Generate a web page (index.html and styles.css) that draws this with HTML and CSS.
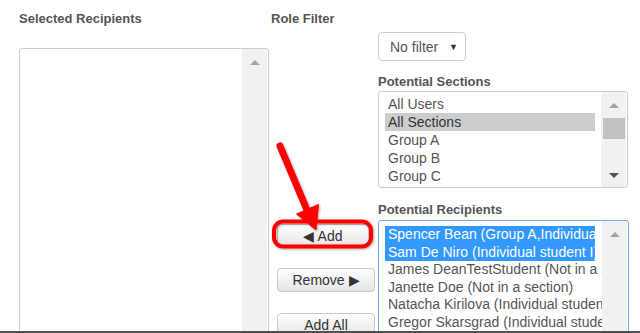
FILE: index.html
```html
<!DOCTYPE html>
<html lang="en">
<head>
    <meta charset="UTF-8">
    <title>Message Recipients</title>
    <link rel="stylesheet" href="styles.css">
</head>
<body>
    <div class="page">

        <!-- Selected recipients -->
        <div class="col col-selected">
            <h3 class="label">Selected Recipients</h3>
            <div class="listbox listbox-selected">
                <div class="options"></div>
                <div class="scrollbar">
                    <span class="arrow-up"></span>
                </div>
            </div>
        </div>

        <!-- Move buttons -->
        <div class="col col-actions">
            <h3 class="label">Role Filter</h3>
            <button class="btn btn-add">&#9664; Add</button>
            <button class="btn btn-remove">Remove &#9654;</button>
            <button class="btn btn-add-all">Add All</button>
        </div>

        <!-- Filters and potential lists -->
        <div class="col col-filter">
            <div class="dropdown">
                <span>No filter</span>
                <span class="caret">&#9660;</span>
            </div>

            <h3 class="label label-sections">Potential Sections</h3>
            <div class="listbox listbox-sections">
                <div class="options">
                    <div class="option">All Users</div>
                    <div class="option selected">All Sections</div>
                    <div class="option">Group A</div>
                    <div class="option">Group B</div>
                    <div class="option">Group C</div>
                    <div class="option">Individual students</div>
                </div>
                <div class="scrollbar">
                    <span class="arrow-up"></span>
                    <span class="thumb"></span>
                    <span class="arrow-down"></span>
                </div>
            </div>

            <h3 class="label label-recipients">Potential Recipients</h3>
            <div class="listbox listbox-recipients">
                <div class="options">
                    <div class="option active">Spencer Bean (Group A,Individual student)</div>
                    <div class="option active">Sam De Niro (Individual student I)</div>
                    <div class="option">James DeanTestStudent (Not in a section)</div>
                    <div class="option">Janette Doe (Not in a section)</div>
                    <div class="option">Natacha Kirilova (Individual student)</div>
                    <div class="option">Gregor Skarsgrad (Individual student)</div>
                    <div class="option">Mary Smith (Group B)</div>
                </div>
                <div class="scrollbar">
                    <span class="arrow-up"></span>
                </div>
            </div>
        </div>

        <!-- Callout drawn over the Add button -->
        <svg class="callout" width="640" height="333" viewBox="0 0 640 333">
            <defs>
                <filter id="shadow" x="-20%" y="-20%" width="140%" height="140%">
                    <feDropShadow dx="1" dy="1" stdDeviation="1" flood-color="#000" flood-opacity="0.35"/>
                </filter>
            </defs>
            <g filter="url(#shadow)" fill="none" stroke="#ff0000">
                <rect x="274" y="221.5" width="97" height="25" rx="9" stroke-width="4"/>
                <line x1="280" y1="146" x2="307" y2="210" stroke-width="7" stroke-linecap="round"/>
                <polygon points="316,230 318.5,204.5 296.5,214" fill="#ff0000" stroke-width="1" stroke-linejoin="round"/>
            </g>
        </svg>
    </div>
</body>
</html>
```

FILE: styles.css
```css
/* General Reset */
* {
    margin: 0;
    padding: 0;
    box-sizing: border-box;
}

body {
    background: #fff;
    font-family: 'Liberation Sans', Arial, sans-serif;
    color: #555;
}

/* Page frame */
.page {
    position: relative;
    height: 333px;
    overflow: hidden;
    border-bottom: 2px solid #4f4f4f;
    padding: 11px 0 0 19px;
    display: grid;
    grid-template-columns: 252px 107px 251px;
    align-items: start;
}

.col {
    display: flex;
    flex-direction: column;
    align-items: flex-start;
}

.label {
    font-size: 13px;
    font-weight: bold;
    line-height: 16px;
    color: #555;
    white-space: nowrap;
}

/* List boxes */
.listbox {
    display: flex;
    background: #fff;
    border: 1px solid #ccc;
    border-radius: 3px;
    overflow: hidden;
    padding-right: 1px;
}

.options {
    flex: 1;
    overflow: hidden;
    padding: 3px 4px 0 6px;
    font-size: 14px;
    white-space: nowrap;
}

.option {
    width: 210px;
    line-height: 18px;
    padding-left: 3px;
    color: #555;
}

.option.selected {
    background: #cdcdcd;
    color: #333;
}

.option.active {
    background: #3399ff;
    color: #fff;
}

.scrollbar {
    width: 25px;
    background: #f1f1f1;
    display: flex;
    flex-direction: column;
    align-items: center;
}

.arrow-up,
.arrow-down {
    width: 0;
    height: 0;
    border-left: 5.5px solid transparent;
    border-right: 5.5px solid transparent;
}

.arrow-up {
    margin-top: 11px;
    border-bottom: 5px solid #a3a3a3;
}

.arrow-down {
    margin-top: auto;
    margin-bottom: 9px;
    border-top: 5px solid #505050;
}

.thumb {
    width: 22px;
    height: 21px;
    margin-top: 10px;
    background: #c1c1c1;
}

.listbox-selected {
    width: 250px;
    height: 300px;
    margin-top: 21px;
}

.listbox-sections {
    width: 250px;
    height: 97px;
}

.listbox-recipients {
    width: 251px;
    height: 150px;
    border-color: #7aa7ea;
}

.listbox-recipients .options {
    padding-top: 5px;
}

.listbox-recipients .option {
    line-height: 17.5px;
}

/* Role filter dropdown */
.dropdown {
    width: 88px;
    height: 29px;
    margin-top: 21px;
    padding: 0 7px 0 11px;
    border: 1px solid #ccc;
    border-radius: 4px;
    display: flex;
    align-items: center;
    justify-content: space-between;
    font-size: 14px;
    color: #555;
}

.caret {
    font-size: 9px;
    color: #333;
}

.label-sections {
    margin-top: 13px;
    margin-bottom: 1px;
}

.label-recipients {
    margin-top: 14px;
    margin-bottom: 2px;
}

/* Buttons */
.btn {
    height: 24px;
    margin-left: 6px;
    border: 1px solid #c8c8c8;
    border-radius: 4px;
    background: linear-gradient(#fff, #e4e4e4);
    font-family: 'Liberation Sans', Arial, sans-serif;
    font-size: 14px;
    color: #333;
}

.btn-add {
    width: 92px;
    margin-top: 197px;
}

.btn-remove {
    width: 98px;
    margin-top: 20px;
}

.btn-add-all {
    width: 98px;
    margin-top: 21px;
}

/* Red callout */
.callout {
    position: absolute;
    top: 0;
    left: 0;
    pointer-events: none;
}
```
